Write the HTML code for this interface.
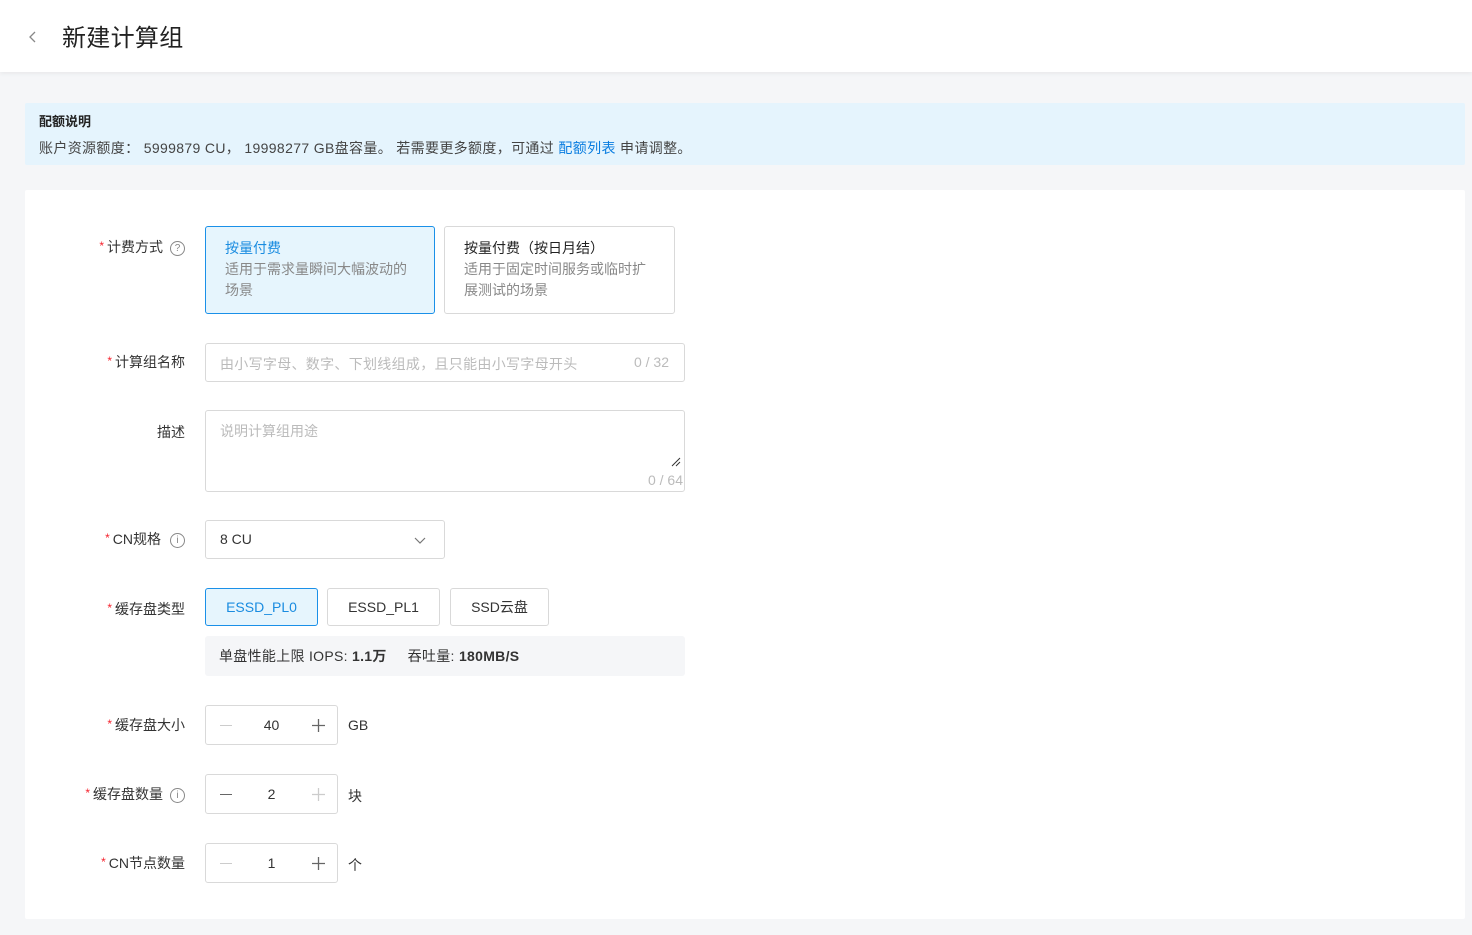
<!DOCTYPE html>
<html><head><meta charset="utf-8"><style>
*{box-sizing:border-box;margin:0;padding:0}
body{width:1472px;height:935px;background:#f5f6f8;font-family:"Liberation Sans","Noto Sans CJK SC",sans-serif;color:#333;position:relative;overflow:hidden;font-size:14px}
.abs{position:absolute}
.hdr{left:0;top:0;width:1472px;height:72px;background:#fff;box-shadow:0 2px 4px rgba(0,0,0,.05)}
.notice{left:25px;top:103px;width:1440px;height:62px;background:#e5f4fd;border-radius:2px}
.card{left:25px;top:190px;width:1440px;height:729px;background:#fff;border-radius:2px}
.lbl{right:1287px;font-size:14px;color:#333;white-space:nowrap;text-align:right}
.lbl .s{color:#f5222d;font-size:12px;margin-right:3px;vertical-align:2px}
.ic{display:inline-block;width:15px;height:15px;border:1px solid #888;border-radius:50%;font-size:10px;line-height:13px;text-align:center;color:#888;margin-left:7px;vertical-align:1px}
.box{border:1px solid #d9d9d9;border-radius:3px;background:#fff}
.opt{border:1px solid #d9d9d9;border-radius:3px;font-size:14px;text-align:center;line-height:36px;height:38px}
.step{width:133px;height:40px}
.mn{position:absolute;left:14px;top:19px;width:12px;height:1.3px}
.pl{position:absolute;left:106px;top:13px}
</style></head><body>
<div class="abs hdr">
<svg class="abs" style="left:28px;top:30px" width="10" height="14"><path d="M7 2 L2 7 L7 12" stroke="#888" stroke-width="1.3" fill="none"/></svg>
<div class="abs" style="left:62px;top:18px;font-size:24px;color:#222;letter-spacing:0.3px">新建计算组</div>
</div>
<div class="abs notice">
<div class="abs" style="left:14px;top:8px;font-size:13px;font-weight:bold;color:#222">配额说明</div>
<div class="abs" style="left:14px;top:35px;font-size:14px;color:#444;white-space:nowrap;letter-spacing:0.35px">账户资源额度： 5999879 CU， 19998277 GB盘容量。 若需要更多额度，可通过 <span style="color:#0a7de0">配额列表</span> 申请调整。</div>
</div>
<div class="abs card"></div>

<div class="abs lbl" style="top:237px"><span class="s">*</span>计费方式<span class="ic">?</span></div>
<div class="abs" style="left:205px;top:226px;width:230px;height:88px;border:1px solid #1a90e8;border-radius:3px;background:#e6f5fd;padding:11px 0 0 19px;font-size:14px;line-height:21px">
<div style="color:#1a8ce0">按量付费</div><div style="color:#888">适用于需求量瞬间大幅波动的<br>场景</div></div>
<div class="abs box" style="left:444px;top:226px;width:231px;height:88px;padding:11px 0 0 19px;font-size:14px;line-height:21px">
<div style="color:#222">按量付费（按日月结）</div><div style="color:#888">适用于固定时间服务或临时扩<br>展测试的场景</div></div>

<div class="abs lbl" style="top:352px"><span class="s">*</span>计算组名称</div>
<div class="abs box" style="left:205px;top:343px;width:480px;height:39px">
<div class="abs" style="left:14px;top:10px;font-size:14px;color:#bbb;letter-spacing:0.3px">由小写字母、数字、下划线组成，且只能由小写字母开头</div>
<div class="abs" style="right:15px;top:10px;font-size:14px;color:#bbb">0 / 32</div></div>

<div class="abs lbl" style="top:422px">描述</div>
<div class="abs box" style="left:205px;top:410px;width:480px;height:82px">
<div class="abs" style="left:14px;top:10px;font-size:14px;color:#bbb">说明计算组用途</div>
<svg class="abs" style="right:2px;top:45px" width="12" height="12"><path d="M2 10 L10 2 M6 10 L10 6" stroke="#333" stroke-width="1"/></svg>
<div class="abs" style="right:1px;top:61px;font-size:14px;color:#bbb">0 / 64</div></div>

<div class="abs lbl" style="top:529px"><span class="s">*</span>CN规格<span class="ic" style="margin-left:9px">i</span></div>
<div class="abs box" style="left:205px;top:520px;width:240px;height:39px">
<div class="abs" style="left:14px;top:10px;font-size:14px;color:#333">8 CU</div>
<svg class="abs" style="left:208px;top:14px" width="12" height="10"><path d="M1 3 L6 8 L11 3" stroke="#777" stroke-width="1.2" fill="none"/></svg></div>

<div class="abs lbl" style="top:599px"><span class="s">*</span>缓存盘类型</div>
<div class="abs opt" style="left:205px;top:588px;width:113px;border-color:#1a90e8;background:#e6f5fd;color:#1a8ce0">ESSD_PL0</div>
<div class="abs opt" style="left:327px;top:588px;width:113px;color:#333">ESSD_PL1</div>
<div class="abs opt" style="left:450px;top:588px;width:99px;color:#333">SSD云盘</div>
<div class="abs" style="left:205px;top:636px;width:480px;height:40px;background:#f5f6f8;border-radius:3px;padding:10px 0 0 14px;font-size:14px;color:#333;white-space:nowrap;letter-spacing:0.3px">单盘性能上限 IOPS: <b>1.1万</b> &nbsp;&nbsp;&nbsp;&nbsp;吞吐量: <b>180MB/S</b></div>

<div class="abs lbl" style="top:715px"><span class="s">*</span>缓存盘大小</div>
<div class="abs box step" style="left:205px;top:705px"><div class="mn" style="background:#ccc"></div><div class="abs" style="left:0;width:131px;text-align:center;top:11px;font-size:14px">40</div><svg class="pl" width="13" height="13"><path d="M0 6.5H13M6.5 0V13" stroke="#666" stroke-width="1.3"/></svg></div>
<div class="abs" style="left:348px;top:717px;font-size:14px">GB</div>

<div class="abs lbl" style="top:784px"><span class="s">*</span>缓存盘数量<span class="ic">i</span></div>
<div class="abs box step" style="left:205px;top:774px"><div class="mn" style="background:#666"></div><div class="abs" style="left:0;width:131px;text-align:center;top:11px;font-size:14px">2</div><svg class="pl" width="13" height="13"><path d="M0 6.5H13M6.5 0V13" stroke="#ccc" stroke-width="1.3"/></svg></div>
<div class="abs" style="left:348px;top:786px;font-size:14px">块</div>

<div class="abs lbl" style="top:853px"><span class="s">*</span>CN节点数量</div>
<div class="abs box step" style="left:205px;top:843px"><div class="mn" style="background:#ccc"></div><div class="abs" style="left:0;width:131px;text-align:center;top:11px;font-size:14px">1</div><svg class="pl" width="13" height="13"><path d="M0 6.5H13M6.5 0V13" stroke="#666" stroke-width="1.3"/></svg></div>
<div class="abs" style="left:348px;top:855px;font-size:14px">个</div>
</body></html>
